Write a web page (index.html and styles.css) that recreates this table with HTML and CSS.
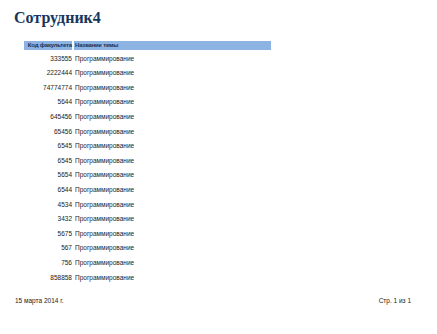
FILE: index.html
```html
<!DOCTYPE html>
<html lang="ru">
<head>
<meta charset="utf-8">
<link rel="stylesheet" href="styles.css">
</head>
<body>
<div class="page">
  <h1 class="title">Сотрудник4</h1>
  <div class="report-head">
    <div class="hcell code">Код факультета</div>
    <div class="hcell name">Название темы</div>
  </div>
  <div class="report-body">
    <div class="cell code">333555</div><div class="cell name">Программирование</div>
    <div class="cell code">2222444</div><div class="cell name">Программирование</div>
    <div class="cell code">74774774</div><div class="cell name">Программирование</div>
    <div class="cell code">5644</div><div class="cell name">Программирование</div>
    <div class="cell code">645456</div><div class="cell name">Программирование</div>
    <div class="cell code">65456</div><div class="cell name">Программирование</div>
    <div class="cell code">6545</div><div class="cell name">Программирование</div>
    <div class="cell code">6545</div><div class="cell name">Программирование</div>
    <div class="cell code">5654</div><div class="cell name">Программирование</div>
    <div class="cell code">6544</div><div class="cell name">Программирование</div>
    <div class="cell code">4534</div><div class="cell name">Программирование</div>
    <div class="cell code">3432</div><div class="cell name">Программирование</div>
    <div class="cell code">5675</div><div class="cell name">Программирование</div>
    <div class="cell code">567</div><div class="cell name">Программирование</div>
    <div class="cell code">756</div><div class="cell name">Программирование</div>
    <div class="cell code">858858</div><div class="cell name">Программирование</div>
  </div>
  <div class="footer">
    <span>15 марта 2014 г.</span>
    <span>Стр. 1 из 1</span>
  </div>
</div>
</body>
</html>
```

FILE: styles.css
```css
html, body {
  margin: 0;
  padding: 0;
  background: #ffffff;
}
.page {
  width: 437px;
  height: 334px;
  font-family: "Liberation Sans", Arial, sans-serif;
  color: #1a1a1a;
  font-size: 6.5px;
}
.title {
  margin: 0;
  padding: 8px 0 0 14px;
  height: 25px;
  box-sizing: border-box;
  font-family: "Liberation Serif", "DejaVu Serif", serif;
  font-weight: bold;
  font-size: 16px;
  line-height: 20px;
  color: #17365d;
}
.report-head,
.report-body {
  margin-left: 24px;
  width: 247px;
  display: grid;
  grid-template-columns: 48px 197px;
  column-gap: 2px;
}
.report-head {
  margin-top: 16px;
  height: 9px;
}
.hcell {
  line-height: 9px;
  background: #8db3e2;
  color: #1f2f4a;
  font-weight: bold;
  font-size: 6px;
  letter-spacing: -0.2px;
  white-space: nowrap;
}
.code {
  text-align: right;
}
.name {
  padding-left: 1px;
}
.report-body {
  margin-top: 1.7px;
  grid-auto-rows: 14.6px;
}
.cell {
  line-height: 14.6px;
  white-space: nowrap;
}
.footer {
  margin: 11px 26px 0 15px;
  display: flex;
  justify-content: space-between;
  line-height: 9px;
}
```
